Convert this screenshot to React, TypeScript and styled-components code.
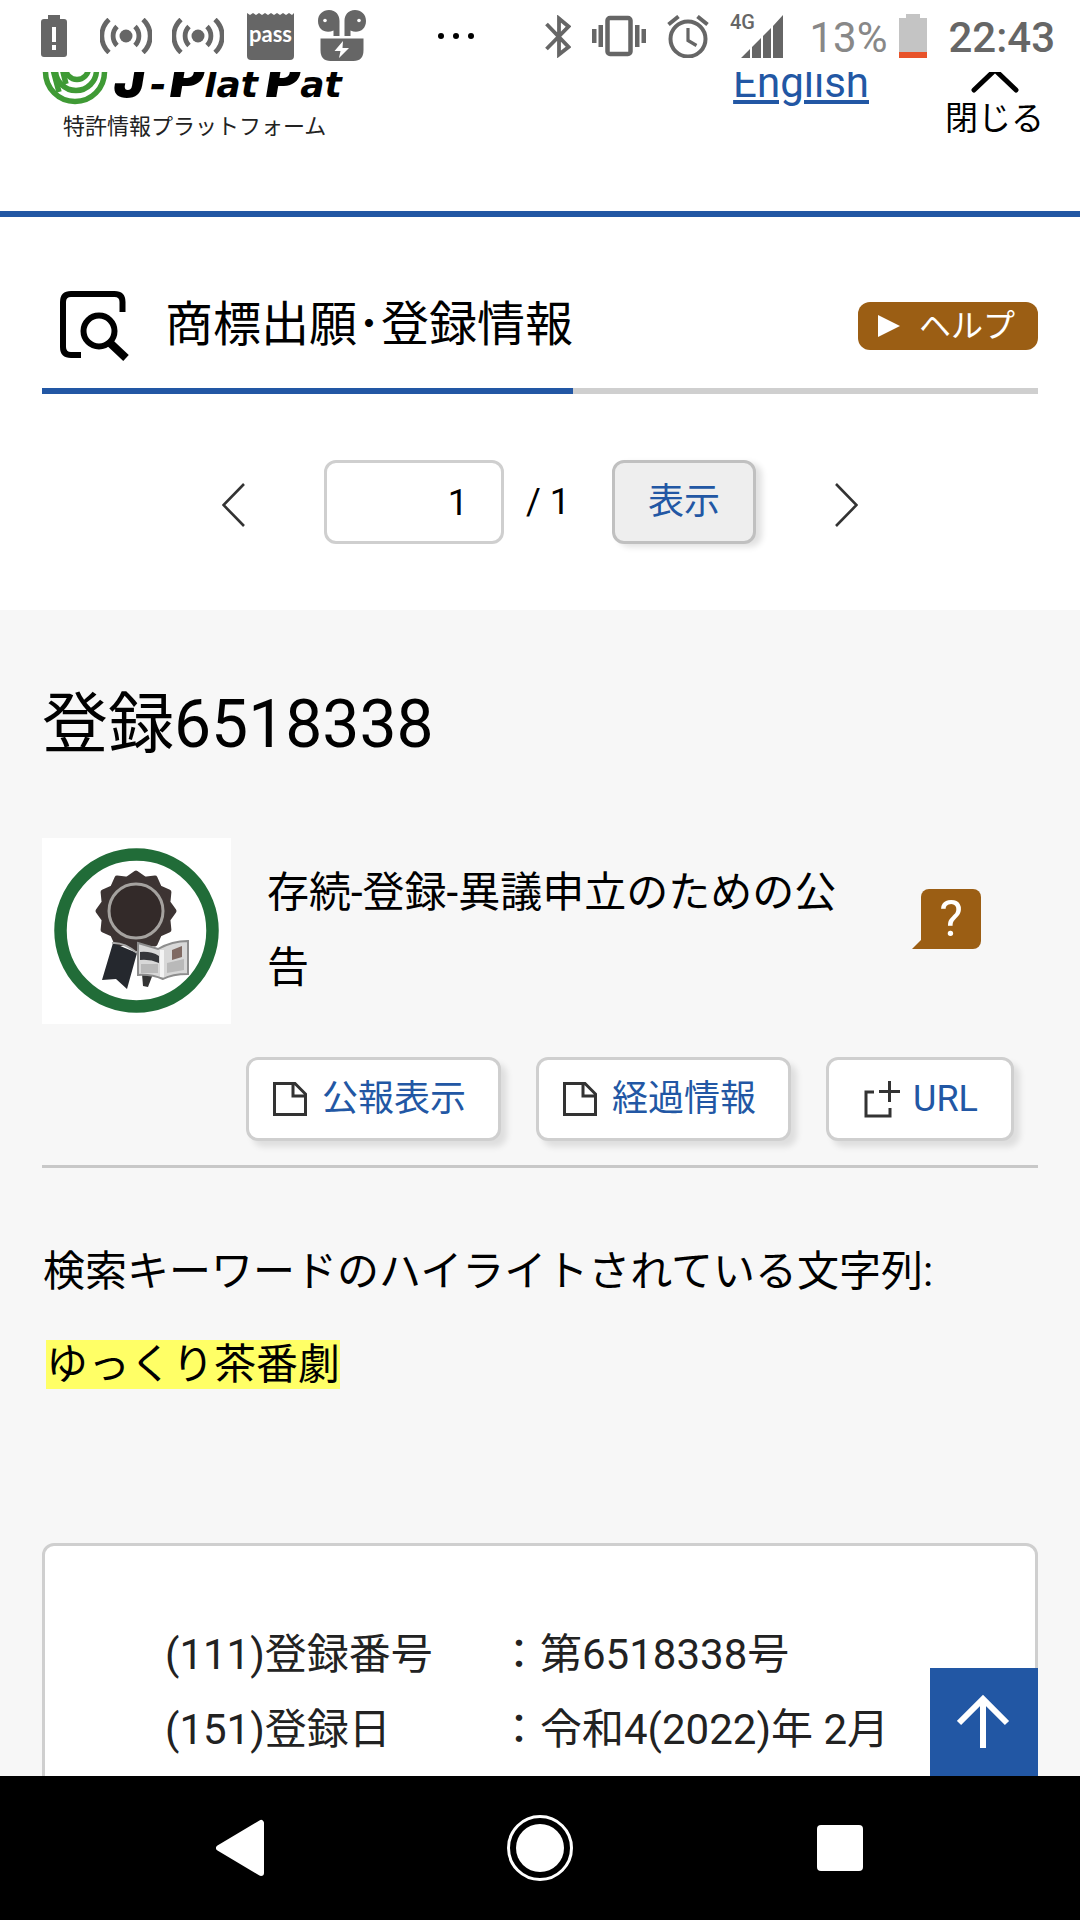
import React, { useState } from "react";
import styled, { createGlobalStyle } from "styled-components";

const blue = "#2257a4";
const brown = "#9b5e14";
const line = "#cfcfcf";
const statusGray = "#666";

const GlobalStyle = createGlobalStyle`
  *, *::before, *::after { box-sizing: border-box; }
  body {
    margin: 0;
    background: #fff;
    color: #000;
    font-family: Roboto, "Noto Sans CJK JP", sans-serif;
    font-size: 42px;
    line-height: 75px;
  }
  h1, h2, p, dl, dt, dd { margin: 0; font-weight: 400; }
  button, input { font: inherit; color: inherit; margin: 0; }
  svg { display: block; flex: none; }
`;

const Screen = styled.div`
  display: grid;
  grid-template-rows: auto minmax(0, 1fr) auto;
  height: 100vh;
`;

/* ---------- status bar ---------- */

const StatusBar = styled.div`
  display: flex;
  align-items: center;
  justify-content: space-between;
  height: 72px;
  padding: 0 25px 0 18px;
  color: ${statusGray};
  line-height: 48px;
`;

const StatusGroup = styled.div<{ $gap?: number }>`
  display: flex;
  align-items: center;
  gap: ${(p) => p.$gap ?? 0}px;
`;

const NoticeSlot = styled.span<{ $spaced?: boolean }>`
  display: flex;
  justify-content: center;
  width: 72px;
  margin-left: ${(p) => (p.$spaced ? "42px" : "0")};
`;

const Percent = styled.span`
  color: #888;
  padding: 3px 0 0 4px;
`;

const Clock = styled.span`
  font-weight: 500;
  padding: 3px 0 0 9px;
`;

/* ---------- page ---------- */

const Viewport = styled.div`
  position: relative;
  min-height: 0;
  overflow: hidden;
`;

const Header = styled.header`
  overflow: hidden;
  border-bottom: 6px solid ${blue};
`;

const HeaderInner = styled.div`
  display: flex;
  align-items: flex-start;
  height: 175px;
  margin-top: -36px;
  padding: 0 36px 0 42px;
`;

const Brand = styled.div`
  flex: 1;
`;

const BrandRow = styled.div`
  display: flex;
  align-items: flex-end;
  height: 69px;
`;

const Wordmark = styled.span`
  display: flex;
  align-items: baseline;
  padding-left: 5px;
  font-family: Inter, "DejaVu Sans", sans-serif;
  font-weight: 900;
  font-style: italic;
  font-size: 52px;
  line-height: 40px;
`;

const WordTail = styled.span`
  font-family: "DejaVu Sans", sans-serif;
  font-weight: 700;
  font-size: 36px;
`;

const Hyphen = styled.span`
  padding: 0 4px;
  font-size: 36px;
`;

const WordGap = styled.span`
  width: 8px;
`;

const Tagline = styled.p`
  padding: 6px 0 0 21px;
  font-size: 22px;
  line-height: 32px;
  color: #222;
`;

const LangLink = styled.a`
  padding-top: 22px;
  margin-right: 76px;
  line-height: 49px;
  color: ${blue};
  text-decoration-thickness: 4px;
  text-underline-offset: 3px;
`;

const CloseButton = styled.button`
  display: flex;
  flex-direction: column;
  align-items: center;
  gap: 4px;
  padding: 30px 0 0;
  border: 0;
  background: none;
  font-size: 33px;
  line-height: 38px;
`;

const TitleBar = styled.div`
  display: flex;
  align-items: center;
  justify-content: space-between;
  margin: 47px 42px 0;
  border-bottom: 6px solid ${line};
`;

const Title = styled.h1`
  display: flex;
  align-items: center;
  height: 130px;
  margin-bottom: -6px;
  padding-left: 18px;
  border-bottom: 6px solid ${blue};
  font-size: 48px;
`;

const TitleText = styled.span`
  padding: 0 0 4px 35px;
`;

const HelpLink = styled.a`
  display: flex;
  align-items: center;
  gap: 19px;
  height: 48px;
  padding: 0 23px 0 20px;
  border-radius: 12px;
  background: ${brown};
  color: #fff;
  font-size: 32px;
  line-height: 42px;
  text-decoration: none;
`;

const Pager = styled.form`
  display: flex;
  justify-content: center;
  padding: 66px 42px;
  font-size: 36px;
  line-height: 78px;
`;

const ArrowButton = styled.button`
  display: flex;
  align-items: center;
  padding: 5px 0 0;
  border: 0;
  background: none;
`;

const PageInput = styled.input`
  width: 180px;
  height: 84px;
  margin-left: 79px;
  padding: 2px 33px 0;
  border: 3px solid ${line};
  border-radius: 12px;
  background: #fff;
  text-align: right;
`;

const PageTotal = styled.span`
  padding: 3px 42px 0 22px;
`;

const ShowButton = styled.button`
  width: 144px;
  height: 84px;
  margin-right: 79px;
  padding: 0;
  border: 3px solid #c0c0c0;
  border-radius: 12px;
  background: #eee;
  box-shadow: 6px 3px 6px rgba(0, 0, 0, 0.12);
  color: ${blue};
`;

const Record = styled.main`
  padding: 76px 42px 0;
  background: #f7f7f7;
`;

const RecordTitle = styled.h2`
  font-size: 66px;
  line-height: 78px;
`;

const Summary = styled.section`
  padding-top: 74px;
  border-bottom: 3px solid #c8c8c8;
`;

const StatusRow = styled.div`
  display: flex;
  align-items: flex-start;
  padding-right: 57px;
`;

const StatusText = styled.p`
  flex: 1;
  padding: 17px 60px 1px 36px;
`;

const HintButton = styled.button`
  position: relative;
  width: 60px;
  height: 60px;
  margin-top: 51px;
  padding: 0;
  border: 0;
  border-radius: 8px 8px 8px 0;
  background: ${brown};
  color: #fff;
  font-size: 50px;
  line-height: 60px;

  &::before {
    content: "";
    position: absolute;
    left: -9px;
    bottom: 0;
    border-left: 9px solid transparent;
    border-bottom: 9px solid ${brown};
  }
`;

const Actions = styled.div`
  display: flex;
  justify-content: flex-end;
  gap: 35px;
  padding: 33px 24px 24px 0;
`;

const ActionButton = styled.button<{ $wide?: boolean }>`
  display: flex;
  align-items: center;
  gap: ${(p) => (p.$wide ? "12px" : "15px")};
  height: 84px;
  padding: ${(p) => (p.$wide ? "0 33px 0 35px" : "0 32px 0 24px")};
  border: 3px solid ${line};
  border-radius: 12px;
  background: #fff;
  box-shadow: 6px 6px 6px rgba(0, 0, 0, 0.1);
  color: ${blue};
  font-size: 36px;
  line-height: 78px;
`;

const Keywords = styled.section`
  display: flex;
  flex-direction: column;
  gap: 18px;
  padding: 66px 0 141px 1px;
`;

const Highlight = styled.mark`
  margin-left: 3px;
  background: #ff6;
  color: inherit;
`;

const Card = styled.section`
  padding: 71px 60px 96px 120px;
  border: 3px solid ${line};
  border-radius: 12px;
  background: #fff;
  color: #222;
`;

const Field = styled.div`
  display: flex;
`;

const FieldName = styled.dt`
  width: 333px;
`;

const TopButton = styled.button`
  position: absolute;
  right: 42px;
  bottom: 0;
  display: flex;
  align-items: center;
  justify-content: center;
  width: 108px;
  height: 108px;
  padding: 0;
  border: 0;
  background: ${blue};
`;

/* ---------- system navigation ---------- */

const NavBar = styled.nav`
  display: grid;
  grid-template-columns: repeat(3, 300px);
  justify-content: center;
  height: 144px;
  background: #000;
`;

const NavButton = styled.button`
  display: flex;
  align-items: center;
  justify-content: center;
  padding: 0;
  border: 0;
  background: none;
`;

/* ---------- icons ---------- */

const BatteryAlert = () => (
  <svg width="26" height="42" viewBox="0 0 26 42" fill={statusGray} fillRule="evenodd">
    <path d="M7 0h12v4h4q3 0 3 3v32q0 3-3 3H3q-3 0-3-3V7q0-3 3-3h4zM11 12v15h4V12zM11 30v5h4v-5z" />
  </svg>
);

const Hotspot = () => (
  <svg width="52" height="36" viewBox="0 0 52 36" fill="none" stroke={statusGray} strokeWidth="4.8">
    <circle cx="26" cy="18" r="6.5" fill={statusGray} stroke="none" />
    <path d="M17 8.500a13.500 13.500 0 0 0 0 19M35 8.500a13.500 13.500 0 0 1 0 19M9 1.500a22.500 22.500 0 0 0 0 33M43 1.500a22.500 22.500 0 0 1 0 33" />
  </svg>
);

const PassTicket = () => (
  <svg width="47" height="48" viewBox="0 0 47 48">
    <path
      d="M0 1l3 2 3-2 3 2 3-2 3 2 3-2 3 2 3-2 3 2 3-2 3 2 3-2 3 2 3-2 3 2 2-2v43q0 4-4 4H4q-4 0-4-4z"
      fill={statusGray}
    />
    <text x="23.500" y="30" textAnchor="middle" fill="#fff" fontFamily="Lato, sans-serif" fontWeight="700" fontSize="22">
      pass
    </text>
  </svg>
);

const Earbuds = () => (
  <svg width="48" height="52" viewBox="0 0 48 52" fill={statusGray}>
    <path d="M11 0c7 0 10.500 5 10.500 11v15h-6v-5.500C8 24 0 20 0 11 0 4 5 0 11 0z" />
    <path d="M37 0c-7 0-10.500 5-10.500 11v15h6v-5.500C40 24 48 20 48 11 48 4 43 0 37 0z" />
    <path d="M2.500 28.500h43V40q0 11-10 11h-23q-10 0-10-11z" />
    <circle cx="7" cy="10.500" r="1.800" fill="#fff" />
    <circle cx="41" cy="10.500" r="1.800" fill="#fff" />
    <path d="M25 31l-8.500 10h6L21 48l10-10h-6.500z" fill="#fff" />
  </svg>
);

const MoreDots = () => (
  <svg width="36" height="6" viewBox="0 0 36 6" fill="#000">
    <circle cx="3" cy="3" r="3" />
    <circle cx="18" cy="3" r="3" />
    <circle cx="33" cy="3" r="3" />
  </svg>
);

const Bluetooth = () => (
  <svg width="26" height="43" viewBox="0 0 26 43" fill="none" stroke={statusGray} strokeWidth="3.8">
    <path d="M1.500 9L23.500 32 14 39.500V3.500l9.500 8L1.500 34" />
  </svg>
);

const Vibrate = () => (
  <svg width="54" height="42" viewBox="0 0 54 42" fill={statusGray}>
    <rect x="15.500" y="3" width="23" height="36" rx="2.500" fill="none" stroke={statusGray} strokeWidth="4.500" />
    <rect x="0" y="14" width="4.500" height="14" />
    <rect x="6.500" y="10" width="4.500" height="22" />
    <rect x="43" y="10" width="4.500" height="22" />
    <rect x="49.500" y="14" width="4.500" height="14" />
  </svg>
);

const AlarmClock = () => (
  <svg width="42" height="43" viewBox="0 0 42 43" fill="none" stroke={statusGray} strokeWidth="4">
    <circle cx="21" cy="24" r="17.500" />
    <path d="M21 13v12.500l8.500 5" strokeWidth="3.200" />
    <path d="M1.500 9.500l10-8M40.500 9.500l-10-8" />
  </svg>
);

const Signal = () => (
  <svg width="54" height="44" viewBox="0 0 54 44" fill={statusGray}>
    <text x="0" y="15" fontFamily="Roboto, sans-serif" fontWeight="500" fontSize="20">
      4G
    </text>
    <path d="M11 44L20 35v9zM22 33l9-9v20h-9zM33 22l8-8v30h-8zM43 12l10-11v43H43z" />
  </svg>
);

const BatteryLow = () => (
  <svg width="28" height="44" viewBox="0 0 28 44">
    <path d="M7 0h14v4h7v34H0V4h7z" fill="#c4c4c4" />
    <path d="M0 38h28v6H0z" fill="#e8532a" />
  </svg>
);

const LogoMark = () => (
  <svg width="67" height="69" viewBox="0 0 67 69" fill="none" stroke="#3f9a35" strokeWidth="5.500">
    <circle cx="33" cy="36" r="29.500" />
    <circle cx="34" cy="34" r="20.500" />
    <circle cx="35" cy="32" r="11.500" />
    <path d="M10 30l7 26M20 32l4 16" />
  </svg>
);

const ChevronUp = () => (
  <svg width="50" height="30" viewBox="0 0 50 30" fill="none" stroke="#000" strokeWidth="5" strokeLinecap="round">
    <path d="M4 24L25 4l21 20" />
  </svg>
);

const SearchPage = () => (
  <svg width="70" height="70" viewBox="0 0 70 70" fill="none" stroke="#000" strokeWidth="6">
    <path d="M62.500 21V11q0-8-8-8H11q-8 0-8 8v45q0 8 8 8h10" />
    <circle cx="39" cy="40" r="15.500" />
    <path d="M49 51l17 16" strokeWidth="8" />
  </svg>
);

const HelpTriangle = () => (
  <svg width="22" height="22" viewBox="0 0 22 22" fill="#fff">
    <path d="M0 0l22 11L0 22z" />
  </svg>
);

const Arrow = ({ next }: { next?: boolean }) => (
  <svg width="23" height="44" viewBox="0 0 23 44" fill="none" stroke="#333" strokeWidth="2.600">
    <path d={next ? "M1 1l20.500 21L1 43" : "M22 1L1.500 22 22 43"} />
  </svg>
);

const RegistrationEmblem = () => {
  const points = Array.from({ length: 24 }, (_, i) => {
    const radius = i % 2 ? 33 : 38;
    const angle = (i * Math.PI) / 12;
    return `${94 + radius * Math.sin(angle)},${73 - radius * Math.cos(angle)}`;
  }).join(" ");
  return (
    <svg width="189" height="186" viewBox="0 0 189 186" role="img" aria-label="登録">
      <rect width="189" height="186" fill="#fff" />
      <circle cx="94.500" cy="92.500" r="76" fill="none" stroke="#216c38" strokeWidth="12.500" />
      <polygon points={points} fill="#3d3433" stroke="#3d3433" strokeWidth="5" strokeLinejoin="round" />
      <circle cx="94" cy="73" r="27" fill="#332a29" stroke="#a5a29f" strokeWidth="3" />
      <path d="M71 105l24 10-10 36-11-10-14 1z" fill="#25282e" />
      <path d="M70 105q12-1 25 10" fill="none" stroke="#aaa" strokeWidth="2" />
      <path d="M100 136h11l-5 13-5-1z" fill="#333" />
      <path d="M96 105l20 6q14-8 30-8v33q-16 0-25 5-12-5-25-4z" fill="#d8d8d8" stroke="#8d8d8d" strokeWidth="2" />
      <path d="M98 114q11-1 19 4v7q-9-4-19-3z" fill="#35363a" />
      <path d="M99 126h17v9H99zM125 125l17-4v11l-17 3z" fill="#b9b9b9" />
      <path d="M130 112l10-4v11l-10 3z" fill="#806a63" />
      <path d="M120 112v27" stroke="#f4f4f4" strokeWidth="4" />
    </svg>
  );
};

const DocumentIcon = () => (
  <svg width="34" height="34" viewBox="0 0 34 34" fill="none" stroke="#333" strokeWidth="3">
    <path d="M1.500 1.500h20.500L32.500 12v20.500h-31zM20 1.500V14h12.500" />
  </svg>
);

const NewWindowIcon = () => (
  <svg width="37" height="37" viewBox="0 0 37 37" fill="none" stroke="#333" strokeWidth="3">
    <path d="M10 11H2v24h24v-8M25.500 0v21M15 10.500h21" />
  </svg>
);

const ArrowUp = () => (
  <svg width="54" height="56" viewBox="0 0 54 56" fill="none" stroke="#fff" strokeWidth="6">
    <path d="M26 54V5M2 29L26 5l24 24" />
  </svg>
);

const BackIcon = () => (
  <svg width="49" height="58" viewBox="0 0 49 58" fill="#fff" stroke="#fff" strokeWidth="6" strokeLinejoin="round">
    <path d="M45 4v50L3 29z" />
  </svg>
);

const HomeIcon = () => (
  <svg width="66" height="66" viewBox="0 0 66 66">
    <circle cx="33" cy="33" r="31.500" fill="none" stroke="#fff" strokeWidth="3" />
    <circle cx="33" cy="33" r="24" fill="#fff" />
  </svg>
);

const RecentsIcon = () => (
  <svg width="46" height="46" viewBox="0 0 46 46">
    <rect width="46" height="46" rx="4" fill="#fff" />
  </svg>
);

const fields = [
  { name: "(111)登録番号", value: "第6518338号" },
  { name: "(151)登録日", value: "令和4(2022)年 2月" },
];

export default function App() {
  const [page, setPage] = useState("1");

  return (
    <Screen>
      <GlobalStyle />
      <StatusBar>
        <StatusGroup>
          <NoticeSlot><BatteryAlert /></NoticeSlot>
          <NoticeSlot><Hotspot /></NoticeSlot>
          <NoticeSlot><Hotspot /></NoticeSlot>
          <NoticeSlot><PassTicket /></NoticeSlot>
          <NoticeSlot><Earbuds /></NoticeSlot>
          <NoticeSlot $spaced><MoreDots /></NoticeSlot>
        </StatusGroup>
        <StatusGroup $gap={21}>
          <Bluetooth />
          <Vibrate />
          <AlarmClock />
          <Signal />
          <StatusGroup $gap={12}>
            <Percent>13%</Percent>
            <BatteryLow />
            <Clock>22:43</Clock>
          </StatusGroup>
        </StatusGroup>
      </StatusBar>

      <Viewport>
        <Header>
          <HeaderInner>
            <Brand>
              <BrandRow>
                <LogoMark />
                <Wordmark>
                  J<Hyphen>-</Hyphen>P<WordTail>lat</WordTail>
                  <WordGap />P<WordTail>at</WordTail>
                </Wordmark>
              </BrandRow>
              <Tagline>特許情報プラットフォーム</Tagline>
            </Brand>
            <LangLink href="#english">English</LangLink>
            <CloseButton type="button">
              <ChevronUp />
              閉じる
            </CloseButton>
          </HeaderInner>
        </Header>

        <TitleBar>
          <Title>
            <SearchPage />
            <TitleText>商標出願･登録情報</TitleText>
          </Title>
          <HelpLink href="#help">
            <HelpTriangle />
            ヘルプ
          </HelpLink>
        </TitleBar>

        <Pager onSubmit={(e) => e.preventDefault()}>
          <ArrowButton type="button" aria-label="前へ"><Arrow /></ArrowButton>
          <PageInput aria-label="ページ" value={page} onChange={(e) => setPage(e.target.value)} />
          <PageTotal>/ 1</PageTotal>
          <ShowButton type="submit">表示</ShowButton>
          <ArrowButton type="button" aria-label="次へ"><Arrow next /></ArrowButton>
        </Pager>

        <Record>
          <RecordTitle>登録6518338</RecordTitle>
          <Summary>
            <StatusRow>
              <RegistrationEmblem />
              <StatusText>存続-登録-異議申立のための公告</StatusText>
              <HintButton type="button">?</HintButton>
            </StatusRow>
            <Actions>
              <ActionButton type="button"><DocumentIcon />公報表示</ActionButton>
              <ActionButton type="button"><DocumentIcon />経過情報</ActionButton>
              <ActionButton type="button" $wide><NewWindowIcon />URL</ActionButton>
            </Actions>
          </Summary>

          <Keywords>
            <p>検索キーワードのハイライトされている文字列:</p>
            <p><Highlight>ゆっくり茶番劇</Highlight></p>
          </Keywords>

          <Card>
            <dl>
              {fields.map((field) => (
                <Field key={field.name}>
                  <FieldName>{field.name}</FieldName>
                  <dd>：{field.value}</dd>
                </Field>
              ))}
            </dl>
          </Card>
        </Record>

        <TopButton type="button" aria-label="ページの先頭へ"><ArrowUp /></TopButton>
      </Viewport>

      <NavBar>
        <NavButton type="button" aria-label="戻る"><BackIcon /></NavButton>
        <NavButton type="button" aria-label="ホーム"><HomeIcon /></NavButton>
        <NavButton type="button" aria-label="履歴"><RecentsIcon /></NavButton>
      </NavBar>
    </Screen>
  );
}
